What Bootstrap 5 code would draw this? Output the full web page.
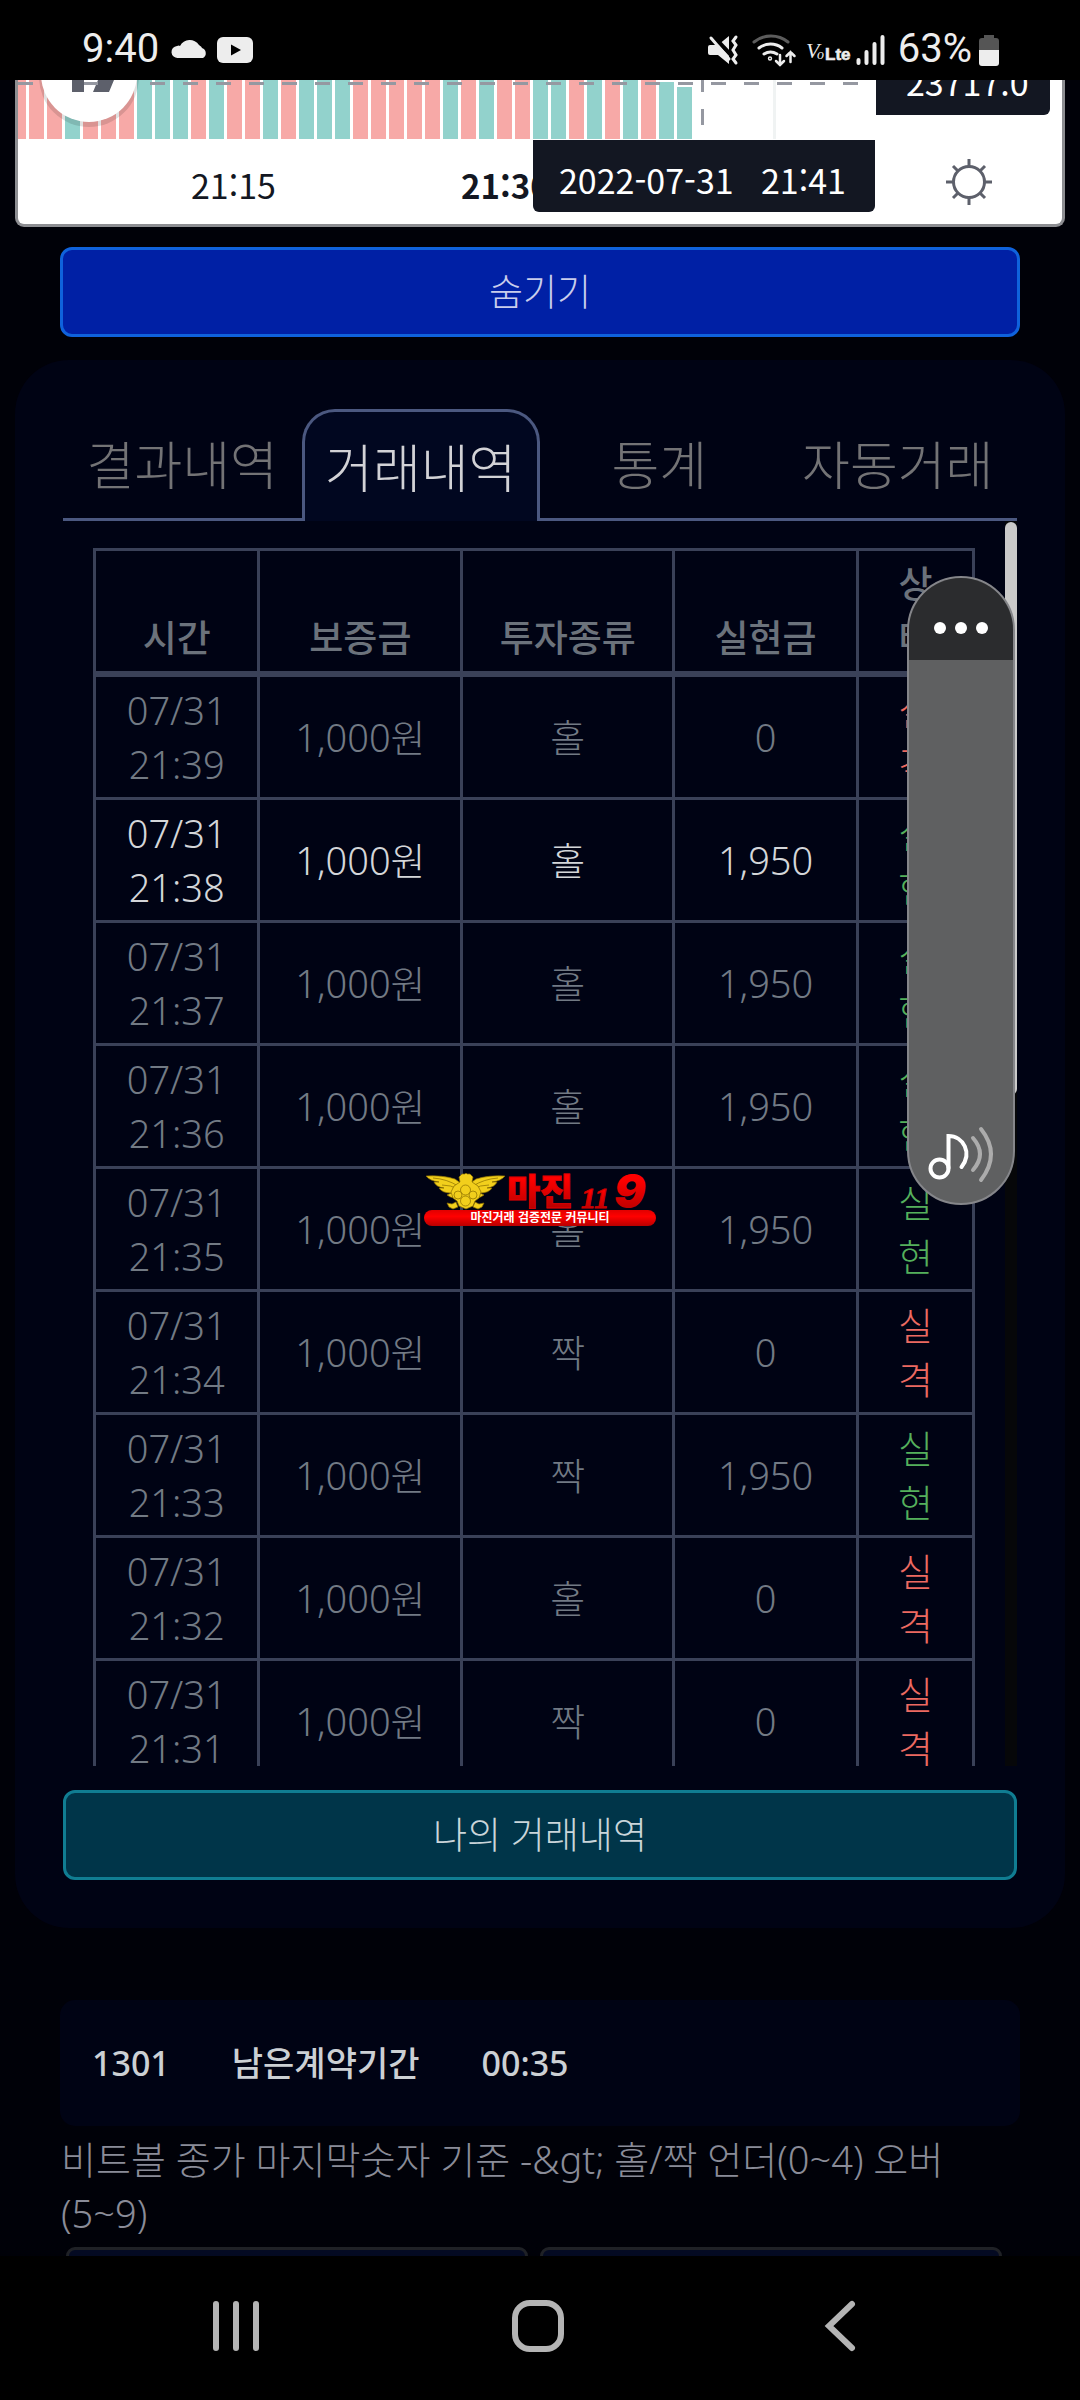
<!DOCTYPE html>
<html lang="ko">
<head>
<meta charset="utf-8">
<meta name="viewport" content="width=device-width, initial-scale=1">
<title>거래내역</title>
<link href="https://cdn.jsdelivr.net/npm/bootstrap@5.3.0/dist/css/bootstrap.min.css" rel="stylesheet">
<style>
:root{--line:#3a4158;--tabline:#4b5880;--panel:#000314;--muted:#727a84}
body{height:100vh;background:#000108;color:#c4c6cc;font-family:"Noto Sans","Noto Sans CJK KR",sans-serif;font-size:38px;line-height:54px;font-weight:300}
.statusbar{height:80px;background:#000;color:#ededed;font-family:Roboto,sans-serif;font-size:40px;line-height:48px;font-weight:400;padding:25px 80px 0 82px}
.statusbar svg{overflow:visible}
.screen{flex:1 1 0;min-height:0;overflow:hidden}
.chart{margin:0 15px;background:#fff;border:3px solid #8d8e92;border-top:0;border-radius:0 0 9px 9px;overflow:hidden}
.chart text{font-family:"Noto Sans CJK KR",sans-serif;font-size:34px;font-weight:400;fill:#131722}
.gear{position:absolute;right:66px;bottom:15px;width:54px;height:54px}
.gutter{margin:20px 60px 0}
.btn-wide{height:90px;font-size:37px;font-weight:300;border-width:3px;border-radius:12px;line-height:54px}
.btn-hide,.btn-hide:hover{background:#0020a5;border-color:#0f62dc;color:#c9cdec}
.btn-mine,.btn-mine:hover{background:#003549;border-color:#107d92;color:#cad5da}
.panel{margin:23px 15px 0;padding:49px 48px 48px;background:var(--panel);border-radius:54px}
.tabs{height:112px}
.tabs .nav-link{height:112px;padding:0;border:0;border-bottom:3px solid var(--tabline);border-radius:0;color:#737375;font-size:52px;line-height:111px;font-weight:300}
.tabs .nav-link.active{border:3px solid var(--tabline);border-bottom:0;border-radius:33px 33px 0 0;background:#010720;color:#d2d2d6;line-height:112px}
.history{height:1245px;margin-bottom:24px}
.history-body{padding:27px 30px 0 30px;overflow:hidden}
.track{width:12px;background:#060709}
.thumb{height:573px;background:#cacaca;border-radius:6px;margin-top:1px}
.deals{table-layout:fixed;border-collapse:collapse;width:100%;color:var(--muted);text-align:center}
.deals th,.deals td{border:3px solid var(--line);padding:6px 12px;height:123px;vertical-align:middle}
.deals th{vertical-align:bottom;border-bottom-width:6px;font-size:37px;font-weight:500;color:#6b727b}
.deals .lit{color:#d4d6d9}
.deals .st{padding:6px 30px;word-break:break-all}
.deals .win{color:#55b05c}
.deals .lose{color:#ec6a61}
.contract{margin:72px 60px 0;height:126px;padding:0 32px;gap:62px;background:var(--panel);border-radius:15px;font-size:34px;font-weight:500;color:#ccd0d4}
.rule{margin:6px 60px 0 61px;color:#8a8c98}
.picks{margin:7px 78px 0 66px;gap:12px}
.pick{height:120px;border:3px solid #1f2126;border-radius:9px;background:#040a22}
.navbar-keys{height:144px;background:#000;padding:0 124px 4px 120px}
.navbar-keys button{width:232px;height:96px}
.volume{position:absolute;right:65px;top:576px;width:108px;height:629px;border-radius:54px;background:#5f6061;border:2px solid #85868a;overflow:hidden}
.volume-head{height:82px;background:#2b2c2e}
.watermark{position:absolute;left:424px;top:1168px;width:232px;height:60px}
</style>
</head>
<body class="d-flex flex-column position-relative overflow-hidden">
<header class="statusbar d-flex justify-content-between">
  <div class="d-flex">
    <span>9:40</span>
    <svg width="90" height="48" viewBox="168 25 90 48" class="ms-2" fill="#ededed" aria-hidden="true">
      <path d="M179 58a6 6 0 0 1-1-12q2-1 3 0a11 11 0 0 1 19-1q3 2 3 3a5.500 5.500 0 0 1 1 10z"/>
      <rect x="218" y="37" width="36" height="26" rx="6"/><path d="M232 44.500v11l10-5.500z" fill="#000"/>
    </svg>
  </div>
  <div class="d-flex">
    <svg width="190" height="48" viewBox="708 25 190 48" fill="none" stroke="#ededed" stroke-width="3" stroke-linecap="round" aria-hidden="true">
      <path d="M710 45h8l11-9v28l-11-9h-8q-2 0-2-2v-6q0-2 2-2z" fill="#ededed" stroke="none"/><path d="M713 36l18 19" stroke="#000" stroke-width="4"/><path d="M711 38l18 21"/>
      <path d="M736 37l-3 4 3 4-3 5 3 5-3 4 3 4"/>
      <path d="M754 42a27 27 0 0 1 34 0" stroke="#5c5c5c"/><path d="M759 48a19 19 0 0 1 23 0M764 54a12 12 0 0 1 13 0"/><circle cx="770" cy="58.500" r=".7"/>
      <path d="M780 55v10m-4-4l4 4 4-4M790.500 62V52m-4 4l4-4 4 4" stroke-width="2.500"/>
      <text x="806" y="58" font-family="Liberation Serif" font-style="italic" font-size="22" fill="#ededed" stroke="none">V</text>
      <text x="817" y="59" font-family="Liberation Serif" font-style="italic" font-size="14" fill="#ededed" stroke="none">o</text>
      <text x="825" y="60" font-family="Liberation Sans" font-weight="700" font-size="17" fill="#ededed" stroke="#ededed" stroke-width=".6">Lte</text>
      <path d="M858.500 60v3M866.500 52v11M874.500 44v19M882.500 37v26" stroke-width="4"/>
    </svg>
    <span>63%</span>
    <svg width="24" height="48" viewBox="975 25 24 48" class="ms-1" aria-hidden="true"><path d="M983 35h10v3h2a3 3 0 0 1 3 3v9h-20v-9a3 3 0 0 1 3-3h2z" fill="#555"/><path d="M978 50h20v13a3 3 0 0 1-3 3h-14a3 3 0 0 1-3-3z" fill="#ededed"/></svg>
  </div>
</header>

<main class="screen">
  <section class="chart position-relative">
    <svg class="d-block w-100" viewBox="0 0 1044 144">
      <path d="M756.500 0v59" stroke="#f0f3f3" stroke-width="3"/>
      <g id="volbars"></g>
      <path d="M0 3.500h842" stroke="#9598a1" stroke-width="3" stroke-dasharray="15 18"/>
      <path d="M684.500 0v12M684.500 29v16" stroke="#9598a1" stroke-width="3"/>
      <circle cx="71" cy="-3" r="50" fill="#000" opacity=".12"/><circle cx="71" cy="-6" r="48" fill="#fff"/>
      <path d="M54 0h12v12H54zM80 0h16l-5 12H75z" fill="#5d606b"/><path d="M66 3.500h14" stroke="#9598a1" stroke-width="3"/>
      <text x="173" y="119">21:15</text>
      <text x="443" y="119" style="font-weight:700;font-size:33px">21:30</text>
      <path d="M515 60h342v66a6 6 0 0 1-6 6H521a6 6 0 0 1-6-6z" fill="#131722"/>
      <text x="541" y="114" style="fill:#fff">2022-07-31</text><text x="743" y="114" style="fill:#fff">21:41</text>
      <path d="M858 0h174v29a6 6 0 0 1-6 6H858z" fill="#131722"/>
      <text x="888" y="16" style="fill:#fff">23717.0</text>
    </svg>
    <button class="gear btn p-0 border-0" aria-label="설정">
      <svg width="54" height="54" viewBox="-27 -27 54 54" fill="none" stroke="#5d606b" stroke-width="3"><circle r="15.500"/><path d="M0-16v-7M0 16v7M-16 0h-7M16 0h7M-11-11l-5-5M11-11l5-5M-11 11l-5 5M11 11l5 5"/></svg>
    </button>
  </section>

  <div class="gutter d-grid"><button class="btn btn-wide btn-hide">숨기기</button></div>

  <section class="panel">
    <ul class="tabs nav nav-justified flex-nowrap">
      <li class="nav-item"><a class="nav-link" href="#">결과내역</a></li>
      <li class="nav-item"><a class="nav-link active" href="#" aria-current="page">거래내역</a></li>
      <li class="nav-item"><a class="nav-link" href="#">통계</a></li>
      <li class="nav-item"><a class="nav-link" href="#">자동거래</a></li>
    </ul>
    <div class="history d-flex overflow-hidden">
      <div class="history-body flex-fill">
        <table class="deals">
          <colgroup><col style="width:18.700%"><col style="width:23.100%"><col style="width:24.100%"><col style="width:20.900%"><col style="width:13.200%"></colgroup>
          <thead><tr><th>시간</th><th>보증금</th><th>투자종류</th><th>실현금</th><th class="st">상태</th></tr></thead>
          <tbody>
            <tr><td>07/31 21:39</td><td>1,000원</td><td>홀</td><td>0</td><td class="st lose">실격</td></tr>
            <tr class="lit"><td>07/31 21:38</td><td>1,000원</td><td>홀</td><td>1,950</td><td class="st win">실현</td></tr>
            <tr><td>07/31 21:37</td><td>1,000원</td><td>홀</td><td>1,950</td><td class="st win">실현</td></tr>
            <tr><td>07/31 21:36</td><td>1,000원</td><td>홀</td><td>1,950</td><td class="st win">실현</td></tr>
            <tr><td>07/31 21:35</td><td>1,000원</td><td>홀</td><td>1,950</td><td class="st win">실현</td></tr>
            <tr><td>07/31 21:34</td><td>1,000원</td><td>짝</td><td>0</td><td class="st lose">실격</td></tr>
            <tr><td>07/31 21:33</td><td>1,000원</td><td>짝</td><td>1,950</td><td class="st win">실현</td></tr>
            <tr><td>07/31 21:32</td><td>1,000원</td><td>홀</td><td>0</td><td class="st lose">실격</td></tr>
            <tr><td>07/31 21:31</td><td>1,000원</td><td>짝</td><td>0</td><td class="st lose">실격</td></tr>
          </tbody>
        </table>
      </div>
      <div class="track flex-shrink-0"><div class="thumb"></div></div>
    </div>
    <div class="d-grid"><button class="btn btn-wide btn-mine">나의 거래내역</button></div>
  </section>

  <section class="contract d-flex align-items-center"><span>1301</span><span>남은계약기간</span><span>00:35</span></section>
  <p class="rule mb-0">비트볼 종가 마지막숫자 기준 -&amp;gt; 홀/짝 언더(0~4) 오버(5~9)</p>
  <div class="picks d-flex"><div class="pick flex-fill"></div><div class="pick flex-fill"></div></div>
</main>

<nav class="navbar-keys d-flex justify-content-between align-items-center">
  <button class="btn border-0 p-0" aria-label="최근 앱"><svg width="60" height="60" viewBox="-30 -30 60 60" stroke="#b4b4b4" stroke-width="6" stroke-linecap="round"><path d="M-20-22v44M0-22v44M20-22v44"/></svg></button>
  <button class="btn border-0 p-0" aria-label="홈"><svg width="60" height="60" viewBox="-30 -30 60 60" fill="none" stroke="#b4b4b4" stroke-width="6"><rect x="-23" y="-23" width="46" height="46" rx="15"/></svg></button>
  <button class="btn border-0 p-0" aria-label="뒤로"><svg width="60" height="60" viewBox="-30 -30 60 60" fill="none" stroke="#b4b4b4" stroke-width="6" stroke-linecap="round"><path d="M12-22L-11 0l23 22"/></svg></button>
</nav>

<div class="volume d-flex flex-column justify-content-between">
  <div class="volume-head"><svg class="d-block" width="104" height="82" viewBox="909 578 104 82" fill="#fff" aria-hidden="true"><circle cx="940" cy="628" r="6"/><circle cx="961" cy="628" r="6"/><circle cx="982" cy="628" r="6"/></svg></div>
  <svg width="104" height="90" viewBox="909 1113 104 90" fill="none" stroke="#fff" stroke-width="4" stroke-linecap="round" aria-hidden="true">
    <circle cx="939.500" cy="1168.500" r="9"/><path d="M948.500 1168v-32c15 0 24 17 13 31"/>
    <path d="M973 1138q14 16 0 32M981 1129q20 25 0 51" stroke="#acacac"/>
  </svg>
</div>

<svg class="watermark" viewBox="424 1168 232 60" role="img" aria-label="마진119">
  <defs><linearGradient id="red" x1="0" y1="0" x2="0" y2="1"><stop offset=".3" stop-color="#f00"/><stop offset="1" stop-color="#a80000"/></linearGradient>
  <linearGradient id="pill" x1="0" y1="0" x2="0" y2="1"><stop offset="0" stop-color="#e00000"/><stop offset=".4" stop-color="#f00"/><stop offset="1" stop-color="#b80000"/></linearGradient></defs>
  <g fill="#f2cf1c" stroke="#8a6d00" stroke-width=".7" stroke-linejoin="round">
    <path d="M426 1176q16-1 29 3l7 5v13q-9 3-15-2l4-2q-9 0-12-5l5 0q-8-1-10-6l5 0q-9-1-13-6z"/>
    <path d="M505 1176q-16-1-29 3l-7 5v13q9 3 15-2l-4-2q9 0 12-5l-5 0q8-1 10-6l-5 0q9-1 13-6z"/>
    <path d="M433 1178q14 1 25 8M442 1185q9 0 16 4M498 1178q-14 1-25 8M489 1185q-9 0-16 4" fill="none"/>
    <path d="M459 1177l3-3h3l1-1 1 1h3l3 3-1 5 6 4 3 6-2 6-4 3-2 5-7 3-7-3-2-5-4-3-2-6 3-6 6-4z"/>
    <circle cx="465.500" cy="1190" r="5"/><circle cx="458" cy="1195" r="4"/><circle cx="473" cy="1195" r="4"/><circle cx="465.500" cy="1201" r="5"/>
    <path d="M447 1203l5 1 4-2 2 5-5 2-4-2zM484 1203l-5 1-4-2-2 5 5 2 4-2z"/>
  </g>
  <text x="507" y="1205" font-family="Noto Sans CJK KR" font-weight="900" font-size="36" fill="url(#red)" stroke="#e00000" stroke-width=".8">마진</text>
  <text x="581" y="1208" font-family="Liberation Serif" font-weight="700" font-style="italic" font-size="30" fill="url(#red)" stroke="#d00000">11</text>
  <text x="614" y="1208" font-family="Inter" font-weight="900" font-style="italic" font-size="47" fill="url(#red)">9</text>
  <rect x="424" y="1210" width="232" height="16" rx="8" fill="url(#pill)"/>
  <text x="540" y="1222" text-anchor="middle" font-family="Noto Sans CJK KR" font-weight="700" font-size="12" fill="#fff">마진거래 검증전문 커뮤니티</text>
</svg>

<script src="https://cdn.jsdelivr.net/npm/bootstrap@5.3.0/dist/js/bootstrap.bundle.min.js"></script>
<script>
// one letter per minute: r = falling, g = rising
const minutes = "rrrgrrrgggrgrrgrgggrrrrrgrgrrggrgrgrgg";
document.getElementById("volbars").innerHTML = [...minutes].map((c, i) => {
  const top = i === 37 ? 7 : i === 36 ? 2 : 0;
  return `<rect x="${i * 18 - 7}" y="${top}" width="15" height="${59 - top}" fill="${c === "r" ? "#f7a9a7" : "#92d2cc"}"/>`;
}).join("");
</script>
</body>
</html>
